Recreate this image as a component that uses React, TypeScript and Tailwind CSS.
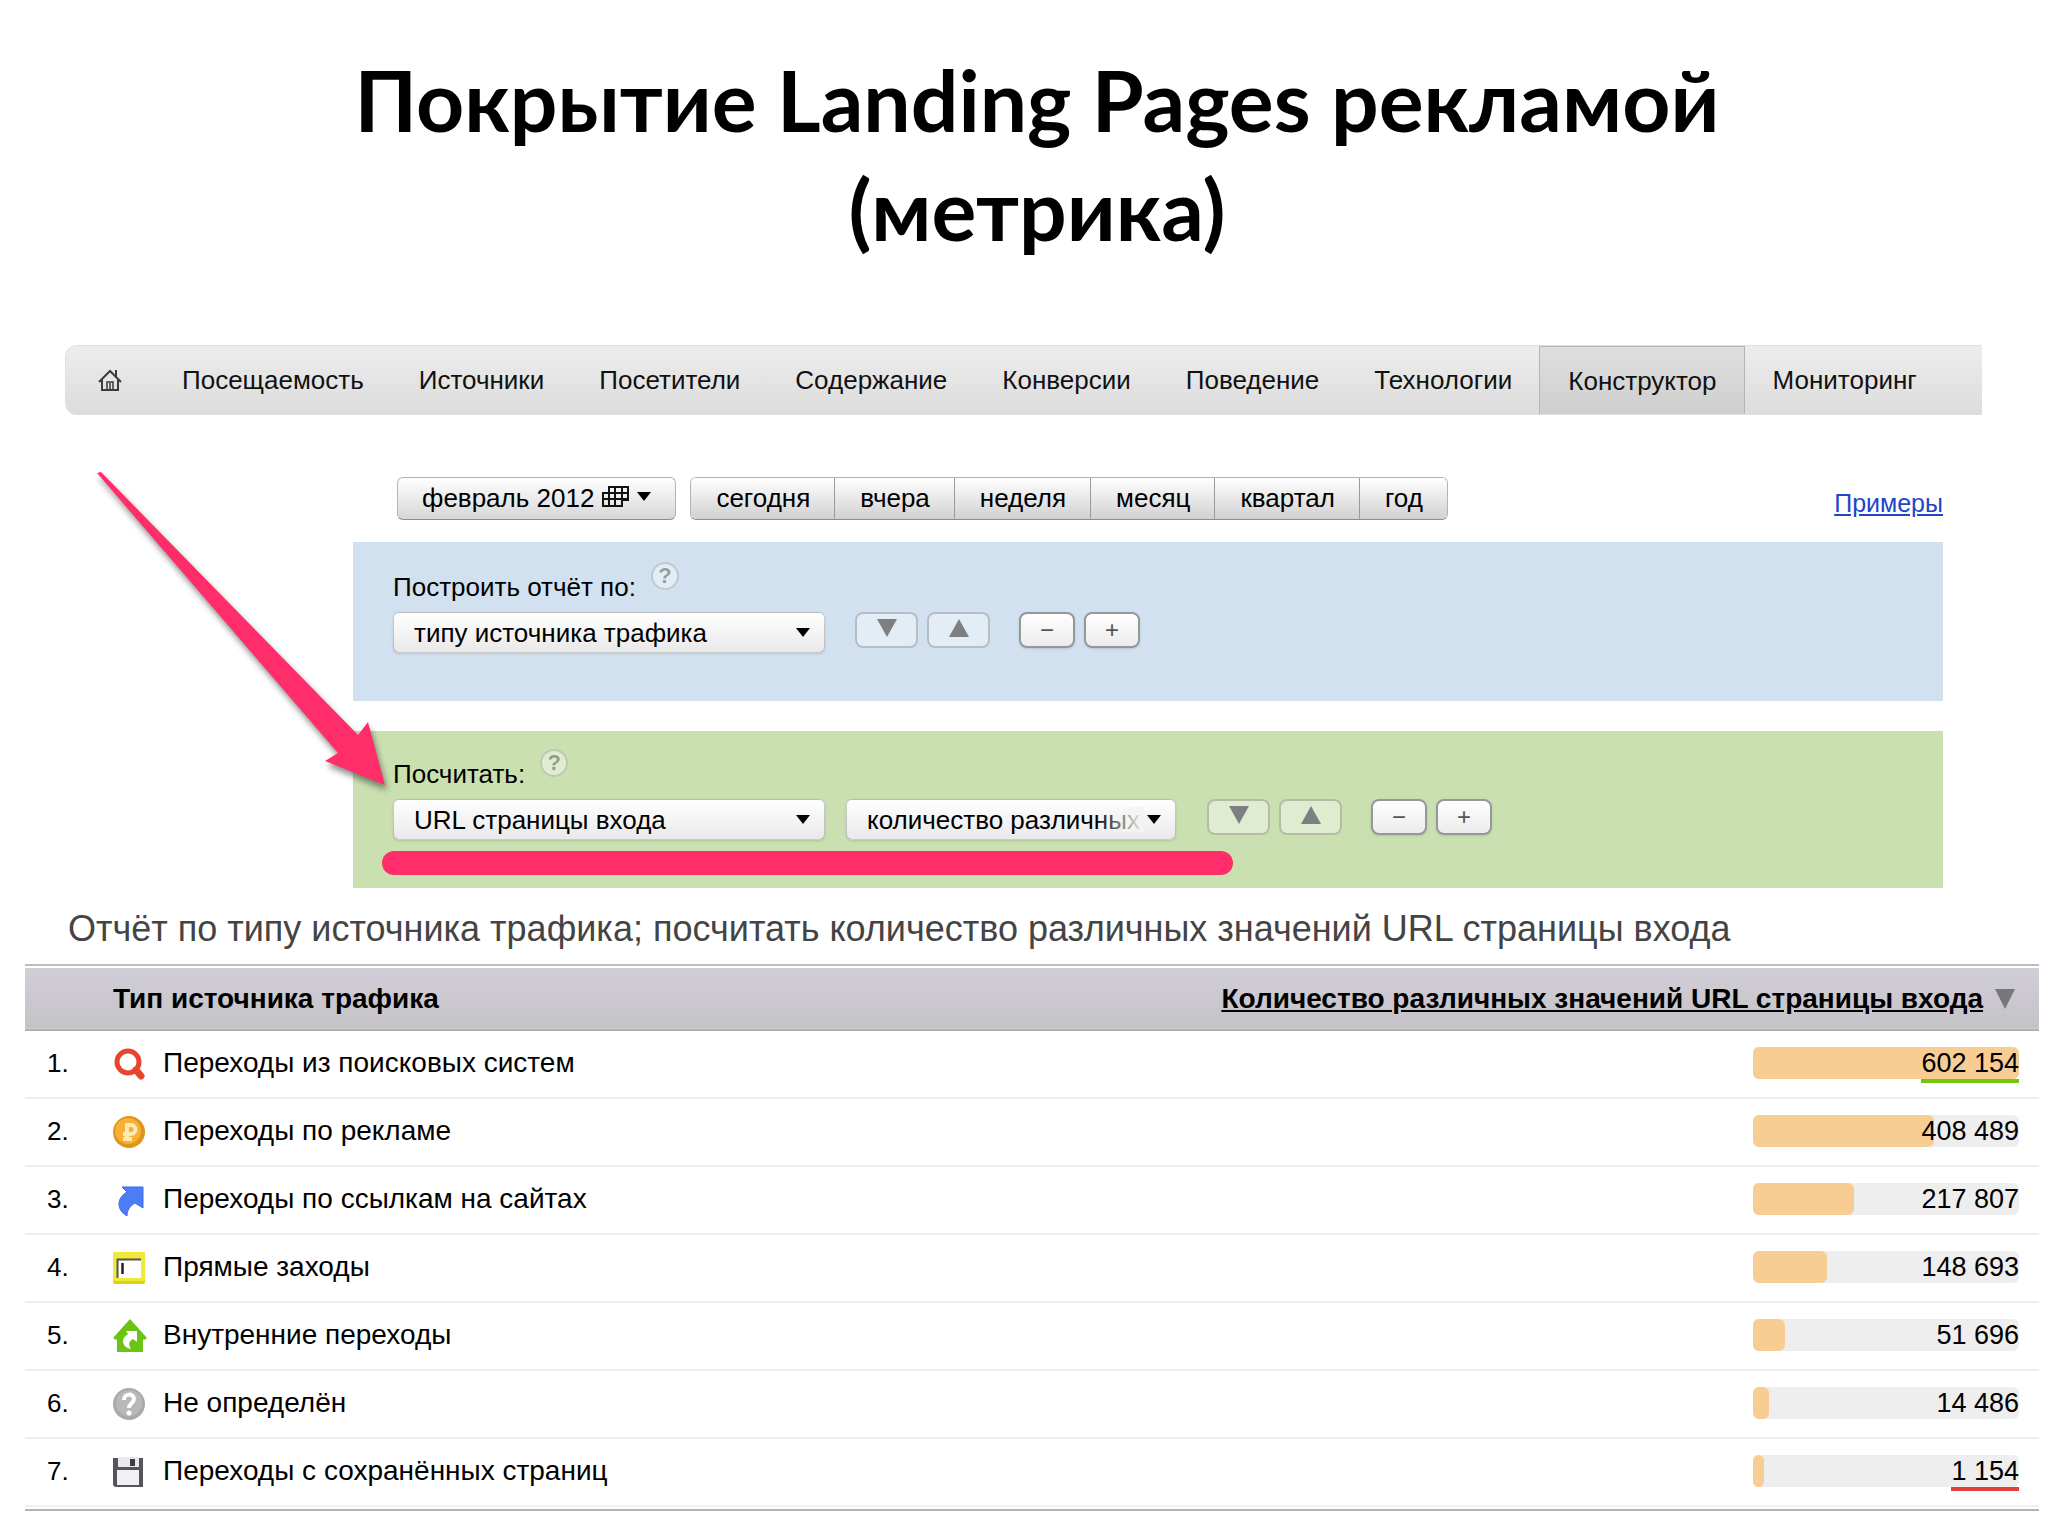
import { ReactNode, useState } from "react";
import clsx from "clsx";

const sections = [
  "Посещаемость",
  "Источники",
  "Посетители",
  "Содержание",
  "Конверсии",
  "Поведение",
  "Технологии",
  "Конструктор",
  "Мониторинг",
];

const periods = ["сегодня", "вчера", "неделя", "месяц", "квартал", "год"];

type Row = {
  label: string;
  value: string;
  bar: number;
  icon: ReactNode;
  mark?: string;
};

const rows: Row[] = [
  { label: "Переходы из поисковых систем", value: "602 154", bar: 100, icon: <SearchIcon />, mark: "border-[#70c80c]" },
  { label: "Переходы по рекламе", value: "408 489", bar: 68, icon: <CoinIcon /> },
  { label: "Переходы по ссылкам на сайтах", value: "217 807", bar: 38, icon: <LinkIcon /> },
  { label: "Прямые заходы", value: "148 693", bar: 28, icon: <DirectIcon /> },
  { label: "Внутренние переходы", value: "51 696", bar: 12, icon: <InternalIcon /> },
  { label: "Не определён", value: "14 486", bar: 6, icon: <UnknownIcon /> },
  { label: "Переходы с сохранённых страниц", value: "1 154", bar: 4, icon: <DiskIcon />, mark: "border-[#e2403c]" },
];

function HomeIcon() {
  return (
    <svg viewBox="0 0 24 24" className="h-6 w-6" fill="none" stroke="#3c3c3c" strokeWidth="2">
      <path d="M1 14 12 3l11 11M4 12v10h16V12M18 9V2" />
      <path d="M9 22v-8h6v8M12 15v7" strokeWidth="1.5" />
    </svg>
  );
}

function CalendarIcon() {
  return (
    <svg viewBox="0 0 27 21" className="h-[21px] w-[27px]" fill="none" stroke="#111" strokeWidth="2">
      <path d="M1 7h19v13H1zM7 7V1h19v13h-6M1 13h25M7 7v13M13 1v19M20 1v6M7 7h19" />
    </svg>
  );
}

function Caret({ className }: { className?: string }) {
  return (
    <svg viewBox="0 0 14 9" className={clsx("h-[9px] w-[14px]", className)} fill="#000">
      <path d="M0 0h14L7 9z" />
    </svg>
  );
}

function SearchIcon() {
  return (
    <svg viewBox="0 0 32 32" className="h-8 w-8" fill="none" stroke="#e8452f">
      <circle cx="15" cy="14" r="11" strokeWidth="5" />
      <path d="m23 22 5 6" strokeWidth="7" strokeLinecap="round" />
    </svg>
  );
}

function CoinIcon() {
  return (
    <svg viewBox="0 0 32 32" className="h-8 w-8" fill="none">
      <circle cx="16" cy="16" r="16" fill="#e0931d" />
      <circle cx="15" cy="15" r="13" fill="#f6b033" />
      <path d="M14 25V9h4a4 4 0 0 1 0 9h-8M10 23h9" stroke="#fdeab4" strokeWidth="4" />
    </svg>
  );
}

function LinkIcon() {
  return (
    <svg viewBox="0 0 32 32" className="h-8 w-8">
      <path
        d="M9 3h21v21l-8-5c-5 3-8 7-8 13C9 29 6 25 6 20c0-5 3-9 8-12z"
        fill="#4c7cf6"
        stroke="#3f68ea"
      />
    </svg>
  );
}

function DirectIcon() {
  return (
    <svg viewBox="0 0 32 32" className="h-8 w-8">
      <rect width="32" height="32" rx="2" fill="#d9d01f" />
      <rect width="32" height="29" rx="2" fill="#f0e935" />
      <rect x="4" y="7" width="24" height="19" fill="#fff" />
      <path d="M4.500 26V7.500H28" fill="none" stroke="#555" strokeWidth="2" />
      <path d="M9.500 11v11" stroke="#222" strokeWidth="2.500" />
    </svg>
  );
}

function InternalIcon() {
  return (
    <svg viewBox="0 0 34 34" className="h-[34px] w-[34px]">
      <path d="M17 0 34 19l-3 2-1-1v13H4V20l-1 1-3-2z" fill="#69c414" />
      <path d="M13 12h11v11l-4-3c-4 2-5 5-2 10-5-1-8-4-8-8 0-3 2-5 5-7z" fill="#fff" />
    </svg>
  );
}

function UnknownIcon() {
  return (
    <svg viewBox="0 0 32 32" className="h-8 w-8" fill="none">
      <circle cx="16" cy="16" r="16" fill="#a9a9a9" />
      <circle cx="16" cy="15" r="13" fill="#b8b8b8" />
      <path d="M11 12c0-7 10-7 10-1 0 4-5 4-5 9" stroke="#fff" strokeWidth="4" />
      <circle cx="16" cy="25" r="2.500" fill="#fff" />
    </svg>
  );
}

function DiskIcon() {
  return (
    <svg viewBox="0 0 30 30" className="h-[30px] w-[30px]">
      <path d="M0 1h30v29H2l-2-2z" fill="#55565a" />
      <path d="M5 0h21v10H5z" fill="#e9e9ec" />
      <path d="M17 2h5v7h-5z" fill="#3c3d40" />
      <path d="M4 13h22v15H4z" fill="#f1f1f3" />
    </svg>
  );
}

function Help() {
  return (
    <button
      type="button"
      aria-label="Справка"
      className="flex h-7 w-7 items-center justify-center rounded-full border-2 border-black/15 bg-white/40 text-[22px] leading-none font-bold text-black/35"
    >
      ?
    </button>
  );
}

function Dropdown({ id, value, className, fade }: { id: string; value: string; className: string; fade?: boolean }) {
  return (
    <div className={clsx("relative h-[41px]", className)}>
      <select
        id={id}
        aria-label={value}
        className="h-full w-full appearance-none overflow-hidden rounded-md border border-black/20 bg-linear-to-b from-white to-[#e9e9ea] pr-8 pl-5 text-[26px] leading-8 whitespace-nowrap text-black shadow-sm"
      >
        <option>{value}</option>
      </select>
      {fade ? (
        <span className="pointer-events-none absolute inset-y-2 right-8 w-12 bg-linear-to-r from-transparent to-[#f4f4f4]" />
      ) : null}
      <Caret className="pointer-events-none absolute top-4 right-[15px]" />
    </div>
  );
}

function RowControls() {
  const move =
    "flex h-9 w-[63px] items-center justify-center rounded-lg border-2 border-black/20 bg-white/40";
  const edit =
    "flex h-9 w-14 items-center justify-center rounded-lg border-2 border-[#94989a] bg-linear-to-b from-white to-[#ececec] text-2xl leading-none text-[#555] shadow-sm";

  return (
    <div className="flex gap-[9px]">
      <button type="button" aria-label="Ниже" className={move}>
        <svg viewBox="0 0 20 18" className="mb-1 h-[18px] w-5" fill="#7d8082">
          <path d="M0 0h20L10 18z" />
        </svg>
      </button>
      <button type="button" aria-label="Выше" className={move}>
        <svg viewBox="0 0 20 18" className="mb-1 h-[18px] w-5" fill="#7d8082">
          <path d="M0 18h20L10 0z" />
        </svg>
      </button>
      <button type="button" className={clsx(edit, "ml-5")}>
        −
      </button>
      <button type="button" className={edit}>
        +
      </button>
    </div>
  );
}

export default function App() {
  const [active, setActive] = useState("Конструктор");

  return (
    <main className="overflow-hidden bg-white pb-6 font-['Liberation_Sans',Arial,sans-serif] text-[26px] leading-8 text-black">
      <h1 className="pt-[45px] pr-[287px] pl-[313px] text-center font-['Lato',sans-serif] text-[84px] leading-[109px] font-bold">
        Покрытие Landing Pages рекламой (метрика)
      </h1>

      <nav className="mt-[82px] mr-[66px] ml-[65px] flex h-[70px] items-stretch rounded-l-xl border border-r-0 border-[#e0e0e0] bg-linear-to-b from-[#ededed] to-[#dddcdd]">
        <a href="#home" aria-label="Главная" className="flex w-[88px] items-center pl-8">
          <HomeIcon />
        </a>
        {sections.map((section) => (
          <a
            key={section}
            href={`#${section}`}
            onClick={() => setActive(section)}
            className={clsx(
              "flex items-center pr-[27px] pl-7 text-[#111]",
              section === active && "border-x border-t border-[#b4b4b4] bg-linear-to-b from-[#dedede] to-[#cfcfcf]",
            )}
          >
            {section}
          </a>
        ))}
      </nav>

      <section className="relative mt-[62px] mr-[105px] ml-[353px]">
        <div className="flex items-center pl-11">
          <button
            type="button"
            className="flex h-[43px] items-center rounded-md border border-[#b4b4b4] border-b-[#8e8e8e] bg-linear-to-b from-white to-[#d8d7d8] px-6 pb-[2px]"
          >
            февраль 2012
            <span className="mb-[2px] ml-2 flex items-center gap-2">
              <CalendarIcon />
              <Caret />
            </span>
          </button>
          <div className="ml-[14px] flex h-[43px] divide-x divide-[#9a9a9a] overflow-hidden rounded-md border border-[#b4b4b4] border-b-[#8e8e8e]">
            {periods.map((period) => (
              <button
                key={period}
                type="button"
                className="bg-linear-to-b from-white to-[#d2d1d2] pr-6 pb-[2px] pl-[25px]"
              >
                {period}
              </button>
            ))}
          </div>
          <a href="#examples" className="mt-2 ml-auto text-[25px] text-[#1f45c8] underline">
            Примеры
          </a>
        </div>

        <div className="mt-[22px] h-[159px] bg-[#d1e1ef] pt-5 pl-10">
          <div className="flex h-[50px] gap-[15px]">
            <label htmlFor="group" className="pt-[9px]">
              Построить отчёт по:
            </label>
            <Help />
          </div>
          <div className="flex">
            <Dropdown id="group" value="типу источника трафика" className="mr-[30px] w-[432px]" />
            <RowControls />
          </div>
        </div>

        <div className="relative mt-[30px] h-[157px] bg-[#cbe0b1] pt-[18px] pl-10">
          <div className="flex h-[50px] gap-[15px]">
            <label htmlFor="metric" className="pt-[9px]">
              Посчитать:
            </label>
            <Help />
          </div>
          <div className="flex">
            <Dropdown id="metric" value="URL страницы входа" className="mr-[21px] w-[432px]" />
            <Dropdown id="aggregate" value="количество различных" className="mr-[31px] w-[330px]" fade />
            <RowControls />
          </div>
          <div className="absolute bottom-[13px] left-[29px] h-6 w-[851px] rounded-full bg-[#ff2d6a]" />
        </div>

        <svg
          viewBox="0 0 310 330"
          className="pointer-events-none absolute -top-3 -left-[263px] h-[330px] w-[310px] drop-shadow-[2px_5px_3px_rgba(0,0,0,0.45)]"
          fill="#ff2d6a"
        >
          <path d="m7 8 4-1 257 263 10-13 17 63-60-24 13-8z" />
        </svg>
      </section>

      <h2 className="mt-[21px] ml-[68px] text-[36px] leading-10 text-[#444]">
        Отчёт по типу источника трафика; посчитать количество различных значений URL страницы входа
      </h2>

      <div className="mt-[15px] mr-[9px] ml-[25px] border-t-2 border-b-2 border-t-[#bdbdbd] border-b-[#b5b3b8] pt-[2px] pb-[2px]">
        <table className="w-full table-fixed">
          <colgroup>
            <col className="w-[88px]" />
            <col />
            <col className="w-[820px]" />
          </colgroup>
          <thead>
            <tr className="h-[62px] border-b-2 border-[#b2b1b3] bg-linear-to-b from-[#d2ced8] to-[#c4c3c6] text-[28px]">
              <th />
              <th className="text-left">Тип источника трафика</th>
              <th className="pr-6">
                <a href="#sort" className="flex items-center justify-end gap-3">
                  <span className="underline">Количество различных значений URL страницы входа</span>
                  <svg viewBox="0 0 20 20" className="h-5 w-5" fill="#77777b">
                    <path d="M0 0h20L10 20z" />
                  </svg>
                </a>
              </th>
            </tr>
          </thead>
          <tbody>
            {rows.map((row, index) => (
              <tr key={row.label} className="h-[68px] border-b-2 border-[#efeef1]">
                <td className="pb-[3px] pl-[22px]">{index + 1}.</td>
                <td className="text-[28px]">
                  <div className="flex items-center">
                    <span className="flex w-[50px]">{row.icon}</span>
                    <span className="pb-[3px]">{row.label}</span>
                  </div>
                </td>
                <td className="pr-5 pb-[2px]">
                  <div className="relative ml-auto h-8 w-[266px] rounded-md bg-[#eeeeef] text-right text-[27px]">
                    <div className="absolute inset-y-0 left-0 rounded-md bg-[#f8cd94]" style={{ width: `${row.bar}%` }} />
                    <span className={clsx("relative inline-block h-9", row.mark && "border-b-4", row.mark)}>
                      {row.value}
                    </span>
                  </div>
                </td>
              </tr>
            ))}
          </tbody>
        </table>
      </div>
    </main>
  );
}
